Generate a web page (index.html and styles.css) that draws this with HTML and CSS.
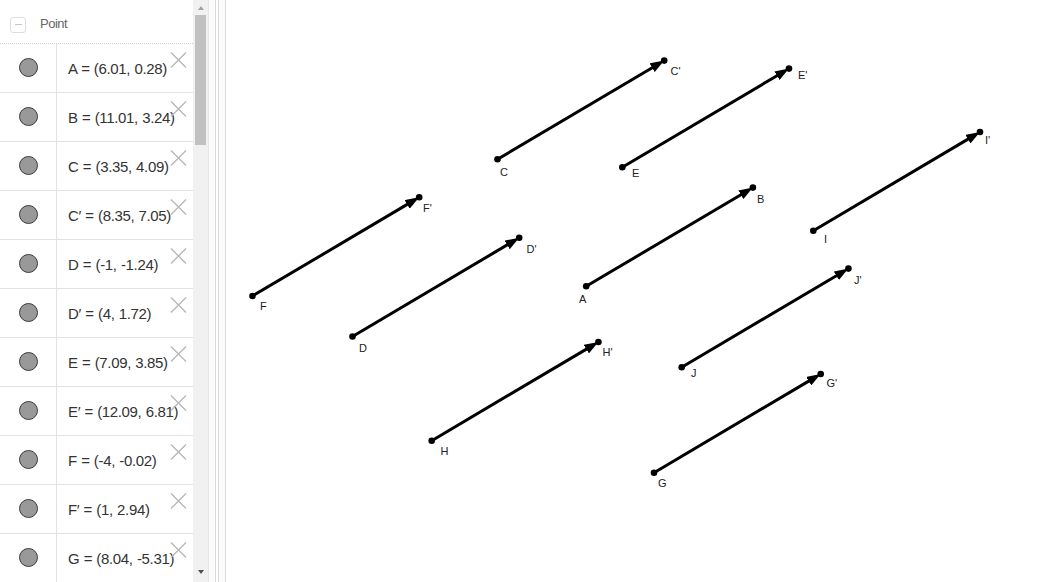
FILE: index.html
```html
<!DOCTYPE html>
<html>
<head>
<meta charset="utf-8">
<link rel="stylesheet" href="styles.css">
</head>
<body>
<div class="app">
  <aside class="algebra">
    <div class="list">
      <div class="header"><span class="toggle"></span><span class="title">Point</span></div>
      <div class="item"><div class="marble-cell"><span class="marble"></span></div><div class="desc">A = (6.01, 0.28)<span class="close"><svg viewBox="0 0 17 16"><path d="M1 0.5 L16 15.5 M16 0.5 L1 15.5"/></svg></span></div></div>
      <div class="item"><div class="marble-cell"><span class="marble"></span></div><div class="desc">B = (11.01, 3.24)<span class="close"><svg viewBox="0 0 17 16"><path d="M1 0.5 L16 15.5 M16 0.5 L1 15.5"/></svg></span></div></div>
      <div class="item"><div class="marble-cell"><span class="marble"></span></div><div class="desc">C = (3.35, 4.09)<span class="close"><svg viewBox="0 0 17 16"><path d="M1 0.5 L16 15.5 M16 0.5 L1 15.5"/></svg></span></div></div>
      <div class="item"><div class="marble-cell"><span class="marble"></span></div><div class="desc">C′ = (8.35, 7.05)<span class="close"><svg viewBox="0 0 17 16"><path d="M1 0.5 L16 15.5 M16 0.5 L1 15.5"/></svg></span></div></div>
      <div class="item"><div class="marble-cell"><span class="marble"></span></div><div class="desc">D = (-1, -1.24)<span class="close"><svg viewBox="0 0 17 16"><path d="M1 0.5 L16 15.5 M16 0.5 L1 15.5"/></svg></span></div></div>
      <div class="item"><div class="marble-cell"><span class="marble"></span></div><div class="desc">D′ = (4, 1.72)<span class="close"><svg viewBox="0 0 17 16"><path d="M1 0.5 L16 15.5 M16 0.5 L1 15.5"/></svg></span></div></div>
      <div class="item"><div class="marble-cell"><span class="marble"></span></div><div class="desc">E = (7.09, 3.85)<span class="close"><svg viewBox="0 0 17 16"><path d="M1 0.5 L16 15.5 M16 0.5 L1 15.5"/></svg></span></div></div>
      <div class="item"><div class="marble-cell"><span class="marble"></span></div><div class="desc">E′ = (12.09, 6.81)<span class="close"><svg viewBox="0 0 17 16"><path d="M1 0.5 L16 15.5 M16 0.5 L1 15.5"/></svg></span></div></div>
      <div class="item"><div class="marble-cell"><span class="marble"></span></div><div class="desc">F = (-4, -0.02)<span class="close"><svg viewBox="0 0 17 16"><path d="M1 0.5 L16 15.5 M16 0.5 L1 15.5"/></svg></span></div></div>
      <div class="item"><div class="marble-cell"><span class="marble"></span></div><div class="desc">F′ = (1, 2.94)<span class="close"><svg viewBox="0 0 17 16"><path d="M1 0.5 L16 15.5 M16 0.5 L1 15.5"/></svg></span></div></div>
      <div class="item"><div class="marble-cell"><span class="marble"></span></div><div class="desc">G = (8.04, -5.31)<span class="close"><svg viewBox="0 0 17 16"><path d="M1 0.5 L16 15.5 M16 0.5 L1 15.5"/></svg></span></div></div>
    </div>
    <div class="scrollbar">
      <span class="arrow up"></span>
      <div class="thumb"></div>
      <div class="spacer"></div>
      <span class="arrow down"></span>
    </div>
  </aside>
  <div class="splitter"><div class="grip"></div></div>
  <main class="graphics">
    <svg class="canvas" viewBox="226 0 814 582" width="814" height="582">
      <defs>
        <marker id="ah" viewBox="0 0 14 10" refX="4" refY="5" markerWidth="14" markerHeight="10" markerUnits="userSpaceOnUse" orient="auto">
          <path d="M0,0 L14,5 L0,10 z" fill="#000"/>
        </marker>
      </defs>
      <g class="vectors" stroke="#000" stroke-width="3" marker-end="url(#ah)">
        <line x1="252.5" y1="296" x2="410.6" y2="202.4"/>
        <line x1="352.5" y1="336.5" x2="510.6" y2="242.9"/>
        <line x1="497.5" y1="159.3" x2="655.6" y2="65.7"/>
        <line x1="622.3" y1="167.3" x2="780.4" y2="73.7"/>
        <line x1="813.3" y1="230.7" x2="971.4" y2="137.1"/>
        <line x1="586.2" y1="286.3" x2="744.3" y2="192.7"/>
        <line x1="681.7" y1="367.3" x2="839.8" y2="273.7"/>
        <line x1="431.7" y1="440.7" x2="589.8" y2="347.1"/>
        <line x1="654" y1="472.7" x2="812.1" y2="379.1"/>
      </g>
      <g class="points" fill="#000">
        <circle cx="252.5" cy="296" r="3.3"/><circle cx="419.2" cy="197.3" r="3.3"/>
        <circle cx="352.5" cy="336.5" r="3.3"/><circle cx="519.2" cy="237.8" r="3.3"/>
        <circle cx="497.5" cy="159.3" r="3.3"/><circle cx="664.2" cy="60.6" r="3.3"/>
        <circle cx="622.3" cy="167.3" r="3.3"/><circle cx="789" cy="68.6" r="3.3"/>
        <circle cx="813.3" cy="230.7" r="3.3"/><circle cx="980" cy="132" r="3.3"/>
        <circle cx="586.2" cy="286.3" r="3.3"/><circle cx="752.9" cy="187.6" r="3.3"/>
        <circle cx="681.7" cy="367.3" r="3.3"/><circle cx="848.4" cy="268.6" r="3.3"/>
        <circle cx="431.7" cy="440.7" r="3.3"/><circle cx="598.4" cy="342" r="3.3"/>
        <circle cx="654" cy="472.7" r="3.3"/><circle cx="820.7" cy="374" r="3.3"/>
      </g>
      <g class="labels">
        <text x="500" y="176">C</text>
        <text x="670.5" y="75">C'</text>
        <text x="632" y="177">E</text>
        <text x="798" y="79">E'</text>
        <text x="824" y="243">I</text>
        <text x="985" y="144">I'</text>
        <text x="260" y="310">F</text>
        <text x="423" y="212">F'</text>
        <text x="359" y="352">D</text>
        <text x="526.5" y="253">D'</text>
        <text x="579" y="303">A</text>
        <text x="757" y="203">B</text>
        <text x="691" y="377">J</text>
        <text x="854" y="284">J'</text>
        <text x="602.5" y="356">H'</text>
        <text x="826.5" y="387">G'</text>
        <text x="440.5" y="455">H</text>
        <text x="658" y="487">G</text>
      </g>
    </svg>
  </main>
</div>
</body>
</html>
```
FILE: styles.css
```css
html, body {
  margin: 0;
  padding: 0;
  background: #fff;
  overflow: hidden;
}

.app {
  display: flex;
  width: 1040px;
  height: 582px;
  overflow: hidden;
  font-family: "Liberation Sans", Arial, sans-serif;
}

.algebra {
  display: flex;
  flex: none;
  width: 208px;
  height: 582px;
  background: #fff;
}

.list {
  width: 193px;
  height: 582px;
  overflow: hidden;
  flex: none;
}

.header {
  display: flex;
  align-items: center;
  box-sizing: border-box;
  height: 44px;
  padding: 6px 0 0 10px;
  border-bottom: 1px dotted #cfcfcf;
}

.toggle {
  position: relative;
  box-sizing: border-box;
  width: 16px;
  height: 16px;
  border: 1px solid #dedede;
  border-radius: 3px;
  display: flex;
  align-items: center;
  justify-content: center;
}

.toggle::before {
  content: "";
  width: 7px;
  height: 1.5px;
  background: #c4c4c4;
}

.title {
  margin-left: 14px;
  margin-bottom: 2px;
  font-size: 13px;
  letter-spacing: -0.5px;
  color: #666;
}

.item {
  display: flex;
  box-sizing: border-box;
  height: 49px;
  border-bottom: 1px solid #e2e2e2;
}

.marble-cell {
  flex: none;
  width: 56px;
  border-right: 1px solid #e2e2e2;
  display: flex;
  align-items: center;
  justify-content: center;
}

.marble {
  box-sizing: border-box;
  width: 19px;
  height: 19px;
  margin-bottom: 2px;
  border-radius: 50%;
  background: #999;
  border: 1px solid #3a3a3a;
}

.desc {
  position: relative;
  flex: 1;
  display: flex;
  align-items: center;
  padding-left: 11px;
  font-size: 15px;
  letter-spacing: -0.35px;
  word-spacing: 0.5px;
  color: #333;
  white-space: nowrap;
}

.close {
  position: absolute;
  top: 8px;
  right: 6px;
  width: 17px;
  height: 16px;
}

.close svg {
  display: block;
  width: 17px;
  height: 16px;
  fill: none;
  stroke: #b8b8b8;
  stroke-width: 1.4;
}

.scrollbar {
  flex: none;
  display: flex;
  flex-direction: column;
  align-items: center;
  box-sizing: border-box;
  width: 15px;
  height: 582px;
  padding: 6px 0 8px;
  background: #f1f1f1;
}

.arrow {
  width: 0;
  height: 0;
  border-left: 3.5px solid transparent;
  border-right: 3.5px solid transparent;
}

.arrow.up {
  border-bottom: 4px solid #a3a3a3;
}

.arrow.down {
  border-top: 4px solid #505050;
}

.thumb {
  width: 11px;
  height: 130px;
  margin-top: 5px;
  background: #c1c1c1;
}

.spacer {
  flex: 1;
}

.splitter {
  flex: none;
  display: flex;
  justify-content: center;
  box-sizing: border-box;
  width: 18px;
  height: 582px;
  background: #fbfbfb;
  border-left: 1px solid #e6e6e6;
  border-right: 1px solid #dadada;
}

.grip {
  box-sizing: border-box;
  width: 4px;
  height: 100%;
  margin-right: 1px;
  border-left: 1px solid #dadada;
  border-right: 1px solid #dadada;
  background: #fff;
}

.graphics {
  flex: 1;
  height: 582px;
  background: #fff;
}

.canvas {
  display: block;
}

.labels text {
  font-family: "Liberation Sans", Arial, sans-serif;
  font-size: 11px;
  fill: #222;
}
```
